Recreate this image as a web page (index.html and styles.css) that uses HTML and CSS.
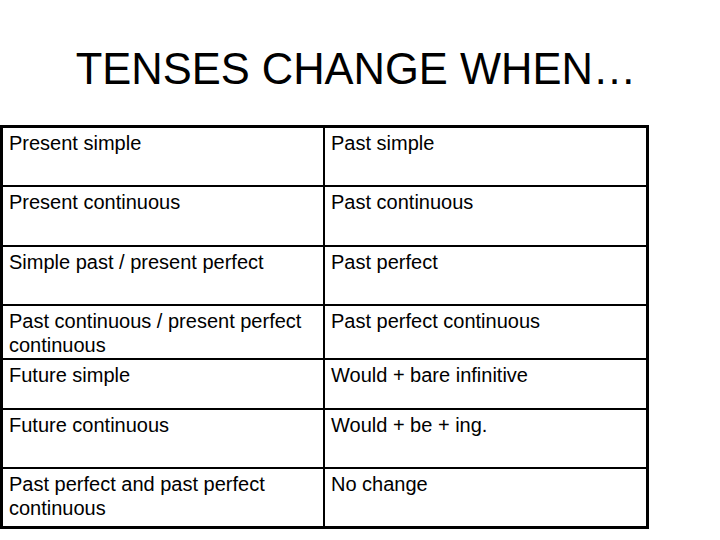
FILE: index.html
```html
<!DOCTYPE html>
<html>
<head>
<meta charset="utf-8">
<link rel="stylesheet" href="styles.css">
</head>
<body>
<h1 class="title">TENSES CHANGE WHEN…</h1>
<table class="tenses">
  <tr class="r1"><td class="c1">Present simple</td><td class="c2">Past simple</td></tr>
  <tr class="r2"><td class="c1">Present continuous</td><td class="c2">Past continuous</td></tr>
  <tr class="r3"><td class="c1">Simple past / present perfect</td><td class="c2">Past perfect</td></tr>
  <tr class="r4"><td class="c1">Past continuous / present perfect continuous</td><td class="c2">Past perfect continuous</td></tr>
  <tr class="r5"><td class="c1">Future simple</td><td class="c2">Would + bare infinitive</td></tr>
  <tr class="r6"><td class="c1">Future continuous</td><td class="c2">Would + be + ing.</td></tr>
  <tr class="r7"><td class="c1">Past perfect and past perfect continuous</td><td class="c2">No change</td></tr>
</table>
</body>
</html>
```
FILE: styles.css
```css
html, body {
  margin: 0;
  padding: 0;
  background: #fff;
}
body {
  width: 720px;
  height: 540px;
  overflow: hidden;
  font-family: "Liberation Sans", Arial, sans-serif;
  color: #000;
}
.title {
  margin: 0 0 31px 0;
  padding: 45px 8px 0 0;
  font-size: 43.5px;
  font-weight: normal;
  line-height: 49px;
  text-align: center;
}
.tenses {
  border-collapse: collapse;
  border: 3px solid #000;
  width: 649px;
  table-layout: fixed;
  margin-left: 0;
}
.tenses td {
  border: 2px solid #000;
  vertical-align: top;
  font-size: 20px;
  line-height: 24px;
  padding: 3px 6px 0 6px;
}
.tenses .c1 { width: 308px; }
.r1 td { height: 54px; }
.r2 td { height: 55px; }
.r3 td { height: 54px; }
.r4 td { height: 49px; }
.r5 td { height: 45px; }
.r6 td { height: 54px; }
.r7 td { height: 54px; }
```
